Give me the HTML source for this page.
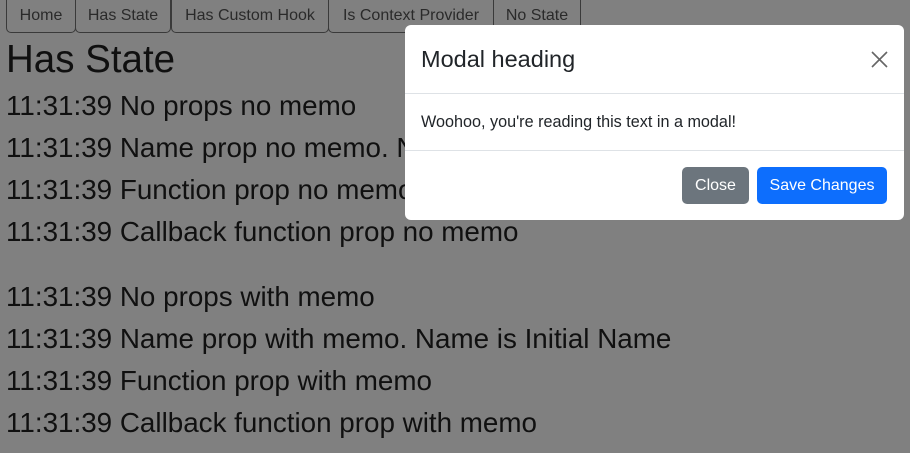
<!DOCTYPE html>
<html><head><style>
body{margin:0;width:910px;height:453px;overflow:hidden;background:#808080;font-family:"Liberation Sans",sans-serif;color:#101010;position:relative}
.tab{position:absolute;top:-1px;height:34px;border:1px solid #3a3a3a;border-top:none;border-radius:0 0 5px 5px;box-sizing:border-box;font-size:16px;line-height:33px;text-align:center;color:#2a2a2a}
.l{position:absolute;left:6px;font-size:27.8px;white-space:nowrap}
.m{position:absolute;left:405px;top:25px;width:499px;height:195px;background:#fff;border-radius:6px}
.btn{position:absolute;top:142px;height:37px;border-radius:5px;color:#fff;font-size:16px;line-height:37px;text-align:center}
</style></head><body>
<div class="tab" style="left:6px;width:70px">Home</div>
<div class="tab" style="left:75px;width:96px">Has State</div>
<div class="tab" style="left:171px;width:158px">Has Custom Hook</div>
<div class="tab" style="left:328px;width:166px">Is Context Provider</div>
<div class="tab" style="left:493px;width:88px">No State</div>
<div class="l" style="top:38px;font-size:38.5px">Has State</div>
<div class="l" style="top:90px">11:31:39 No props no memo</div>
<div class="l" style="top:132px">11:31:39 Name prop no memo. Name is Initial Name</div>
<div class="l" style="top:174px">11:31:39 Function prop no memo</div>
<div class="l" style="top:216px">11:31:39 Callback function prop no memo</div>
<div class="l" style="top:281px">11:31:39 No props with memo</div>
<div class="l" style="top:323px">11:31:39 Name prop with memo. Name is Initial Name</div>
<div class="l" style="top:365px">11:31:39 Function prop with memo</div>
<div class="l" style="top:407px">11:31:39 Callback function prop with memo</div>
<div class="m">
<div style="position:absolute;left:16px;top:21px;font-size:23.5px;color:#212529">Modal heading</div>
<svg style="position:absolute;left:466px;top:26px" width="17" height="17" viewBox="0 0 17 17"><path d="M1 1L16 16M16 1L1 16" stroke="#666" stroke-width="1.6"/></svg>
<div style="position:absolute;left:0;right:0;top:68px;border-top:1px solid #dee2e6"></div>
<div style="position:absolute;left:16px;top:88px;font-size:16.2px;color:#212529">Woohoo, you're reading this text in a modal!</div>
<div style="position:absolute;left:0;right:0;top:125px;border-top:1px solid #dee2e6"></div>
<div class="btn" style="left:277px;width:67px;background:#6c757d">Close</div>
<div class="btn" style="left:352px;width:130px;background:#0d6efd">Save Changes</div>
</div>
</body></html>
